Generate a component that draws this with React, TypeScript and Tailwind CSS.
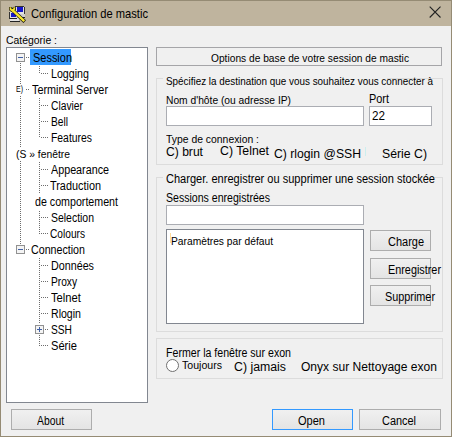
import { useLayoutEffect, useRef, type ReactNode } from "react";
import clsx from "clsx";

/** One line of text, condensed or expanded to fill the width of its box. */
function Line({ children, className }: { children: string; className: string }) {
  const box = useRef<HTMLSpanElement>(null);
  const text = useRef<HTMLSpanElement>(null);
  useLayoutEffect(() => {
    if (!box.current || !text.current) return;
    text.current.style.transform = "none";
    const natural = text.current.getBoundingClientRect().width;
    const wanted = box.current.getBoundingClientRect().width;
    text.current.style.transform = `scaleX(${wanted / natural})`;
  });
  return (
    <span ref={box} className={clsx("block h-4 shrink-0 leading-4", className)}>
      <span ref={text} className="inline-block origin-left whitespace-nowrap">
        {children}
      </span>
    </span>
  );
}

function Toggle({ open }: { open: boolean }) {
  return (
    <svg width="9" height="9" viewBox="0 0 9 9" className="shrink-0" shapeRendering="crispEdges">
      <rect x="0.5" y="0.5" width="8" height="8" rx="1" fill="#f4f4f4" stroke="#919191" />
      <path d={open ? "M2 4.5h5" : "M2 4.5h5M4.5 2v5"} stroke="#3f5fa5" />
    </svg>
  );
}

function PuttyIcon() {
  return (
    <svg width="17" height="17" viewBox="0 0 17 17" className="mt-px shrink-0">
      <g shapeRendering="crispEdges">
        <path d="M6 0h9v8H6z" fill="#e2e2e2" />
        <path d="M8 1h6v5H8z" fill="#1616c8" />
        <path d="M15 1h1v7h-1zM6 0h9v1H6z" fill="#333" />
        <path d="M9 8h7v3H9z" fill="#d0d0d0" />
        <path d="M9 11h7v1H9z" fill="#222" />
        <path d="M1 6h7v6H1z" fill="#e2e2e2" />
        <path d="M2 7h5v4H2z" fill="#1616c8" />
        <path d="M0 6h1v7H0z" fill="#333" />
        <path d="M1 12h9v3H1z" fill="#e2e2e2" />
        <path d="M1 15h10v1H1zM1 12h7v1H1z" fill="#222" />
      </g>
      <path d="M3.5 4L14.4 14.4" stroke="#111" strokeWidth="3.6" strokeLinecap="square" />
      <path d="M1.5 1L1.5 3.6L3.4 4.8L5.5 3.4L5.3 0.8" stroke="#111" strokeWidth="2.8" fill="none" />
      <path d="M1.5 1.3L1.6 3.5L3.4 4.6L5.2 3.2L5.1 1.2" stroke="#f6e52a" strokeWidth="1.7" fill="none" />
      <path d="M3.8 4.4L14.4 14.3" stroke="#f6e52a" strokeWidth="2.4" strokeLinecap="square" />
    </svg>
  );
}

type Item = { label: string; cls: string; toggle?: "open" | "closed" | "E" };

const items: Item[] = [
  { label: "Logging", cls: "ml-[44px] w-[38px]" },
  { label: "Terminal Server", cls: "ml-[2px] w-[76px]", toggle: "E" },
  { label: "Clavier", cls: "ml-[44px] w-[32px]" },
  { label: "Bell", cls: "ml-[44px] w-[17px]" },
  { label: "Features", cls: "ml-[44px] w-[41px]" },
  { label: "(S » fenêtre", cls: "ml-[9px] w-[54px] text-[11px]" },
  { label: "Appearance", cls: "ml-[44px] w-[58px]" },
  { label: "Traduction", cls: "ml-[43px] w-[51px]" },
  { label: "de comportement", cls: "ml-[28px] w-[83px]" },
  { label: "Selection", cls: "ml-[44px] w-[43px]" },
  { label: "Colours", cls: "ml-[43px] w-[35px]" },
  { label: "Connection", cls: "ml-[1px] w-[54px]", toggle: "open" },
  { label: "Données", cls: "ml-[44px] w-[43px]" },
  { label: "Proxy", cls: "ml-[44px] w-[26px]" },
  { label: "Telnet", cls: "ml-[44px] w-[30px]" },
  { label: "Rlogin", cls: "ml-[44px] w-[30px]" },
  { label: "SSH", cls: "ml-[3px] w-[21px]", toggle: "closed" },
  { label: "Série", cls: "ml-[44px] w-[26px]" },
];

/** Dotted connector lines behind the tree's rows. */
function Guides() {
  const stubs = [24, 56, 72, 88, 120, 136, 168, 184, 216, 232, 248, 264, 296];
  return (
    <svg width="60" height="310" className="absolute left-0 top-[1px]" shapeRendering="crispEdges">
      <g stroke="#6d6d6d" strokeDasharray="1 1" fill="none">
        <path d="M13.5 14V36M13.5 47V98M13.5 112V195" />
        <path d="M32.5 17V25M32.5 49V89M32.5 113V145M32.5 162V185M32.5 209V275M32.5 286V297" />
        <path d="M19 8.5h3M19 40.5h3M19 200.5h3M38 280.5h3" />
        {stubs.map((y) => (
          <path key={y} d={`M34 ${y + 0.5}h8`} />
        ))}
      </g>
    </svg>
  );
}

function Tree() {
  return (
    <div className="relative ml-[5px] h-[356px] w-[142px] border border-[#828790] bg-white pt-px">
      <Guides />
      <div className="relative">
        <div className="flex h-4 items-center pl-[9px]">
          <Toggle open />
          <div className="ml-[5px] h-4 w-[41px] bg-[#3399ff] pl-[3px]">
            <Line className="mt-px w-[39px]">Session</Line>
          </div>
        </div>
        {items.map((it) => (
          <div key={it.label} className="flex h-4 items-center">
            {it.toggle === "E" && <Line className="ml-[9px] mr-[7px] w-[7px] text-[9px]">E)</Line>}
            {it.toggle === "open" && (
              <span className="ml-[9px] mr-[5px] flex">
                <Toggle open />
              </span>
            )}
            {it.toggle === "closed" && (
              <span className="ml-[28px] mr-[4px] flex">
                <Toggle open={false} />
              </span>
            )}
            <Line className={clsx("mt-[2px]", it.cls)}>{it.label}</Line>
          </div>
        ))}
      </div>
    </div>
  );
}

function Group({ className, children }: { className: string; children: ReactNode }) {
  return <section className={clsx("w-[287px] border border-[#dcdcdc]", className)}>{children}</section>;
}

function Button({ className, children }: { className?: string; children: ReactNode }) {
  return (
    <button
      className={clsx(
        "flex h-[21px] shrink-0 items-center border bg-linear-to-b from-[#f0f0f0] to-[#e4e4e4] text-left",
        className,
      )}
    >
      {children}
    </button>
  );
}

export default function App() {
  return (
    <div className="flex h-[437px] w-[452px] flex-col overflow-hidden border border-[#958b74] bg-[#f0f0f0] font-['Liberation_Sans',sans-serif] text-[12px] text-black">
      <header className="flex h-[25px] shrink-0 bg-[#bfb49e] pl-[8px] pt-[4px]">
        <PuttyIcon />
        <Line className="ml-[5px] mt-px w-[117px] text-[13px]">Configuration de mastic</Line>
        <svg width="12" height="12" viewBox="0 0 12 12" className="ml-[281px] mt-px">
          <path d="M0.7 0.7l10.8 10.8M11.5 0.7l-10.8 10.8" stroke="#222" strokeWidth="1.1" />
        </svg>
      </header>

      <Line className="ml-[5px] mt-[6px] w-[51px] text-[11px]">Catégorie :</Line>

      <main className="mt-[-1px] flex items-start">
        <Tree />
        <div className="ml-[8px]">
          <div className="h-[19px] w-[286px] border border-[#a5a5a8] pl-[54px]">
            <Line className="mt-[2px] w-[198px] text-[11px]">Options de base de votre session de mastic</Line>
          </div>

          <Group className="mt-[12px] h-[87px]">
            <div className="-mt-[6px] ml-[6px] flex h-4 w-[224px] bg-[#f0f0f0] pl-[3px]">
              <Line className="w-[267px] text-[11px]">Spécifiez la destination que vous souhaitez vous connecter à</Line>
            </div>
            <div className="ml-[9px] mt-[3px] flex">
              <Line className="w-[125px] text-[11px]">Nom d'hôte (ou adresse IP)</Line>
              <Line className="-mt-px ml-[78px] w-[20px]">Port</Line>
            </div>
            <div className="ml-[9px] mt-[-2px] flex gap-[5px]">
              <div className="h-[20px] w-[198px] border border-[#abadb3] bg-white" />
              <div className="h-[20px] w-[63px] border border-[#abadb3] bg-white pl-[2px] pt-px">
                <Line className="w-[13px]">22</Line>
              </div>
            </div>
            <Line className="ml-[9px] mt-[5px] w-[93px] text-[11px]">Type de connexion :</Line>
            <div className="ml-[9px] mt-[-4px] flex">
              <Line className="mt-px w-[37px]">C) brut</Line>
              <Line className="ml-[17px] w-[49px]">C) Telnet</Line>
              <Line className="ml-[5px] mt-[3px] w-[87px]">C) rlogin @SSH</Line>
              <span className="ml-[4px] mt-[4px] h-[9px] w-px bg-[#cdeeee]" />
              <Line className="ml-[16px] mt-[3px] w-[45px]">Série C)</Line>
            </div>
          </Group>

          <Group className="mt-[12px] h-[155px]">
            <div className="-mt-[7px] ml-[6px] flex h-4 w-[254px] bg-[#f0f0f0] pl-[3px]">
              <Line className="w-[269px]">Charger. enregistrer ou supprimer une session stockée</Line>
            </div>
            <Line className="ml-[9px] mt-[3px] w-[104px]">Sessions enregistrées</Line>
            <div className="ml-[9px] mt-[-1px] h-[20px] w-[198px] border border-[#abadb3] bg-white" />
            <div className="ml-[9px] mt-[4px] flex">
              <div className="flex h-[95px] w-[198px] border border-[#828790] bg-white pl-[3px] pt-[3px]">
                <span className="h-[10px] w-px bg-[#ffdc9c]" />
                <Line className="w-[102px] text-[11px]">Paramètres par défaut</Line>
              </div>
              <div className="ml-[6px] mt-px">
                <Button className="w-[61px] border-[#adadad] pl-[17px] pt-[2px]">
                  <Line className="w-[36px]">Charge</Line>
                </Button>
                <Button className="mt-[7px] w-[61px] border-[#adadad] pl-[17px] pt-[2px]">
                  <Line className="w-[53px]">Enregistrer</Line>
                </Button>
                <Button className="mt-[6px] w-[61px] border-[#adadad] pl-[14px] pt-[2px]">
                  <Line className="w-[50px]">Supprimer</Line>
                </Button>
              </div>
            </div>
          </Group>

          <Group className="mt-[6px] h-[41px] pl-[9px] pt-[6px]">
            <Line className="w-[125px]">Fermer la fenêtre sur exon</Line>
            <div className="-mt-[2px] flex">
              <span className="h-[13px] w-[13px] rounded-full border border-[#707070] bg-white" />
              <Line className="ml-[3px] mt-[-2px] w-[40px] text-[11px]">Toujours</Line>
              <Line className="ml-[12px] w-[52px]">C) jamais</Line>
              <Line className="ml-[15px] w-[136px]">Onyx sur Nettoyage exon</Line>
            </div>
          </Group>
        </div>
      </main>

      <footer className="mt-[6px] flex pl-[10px]">
        <Button className="w-[81px] border-[#adadad] pl-[25px] pt-[2px]">
          <Line className="w-[27px]">About</Line>
        </Button>
        <Button className="ml-[180px] w-[81px] border-[#3399ff] pl-[25px] pt-[2px]">
          <Line className="w-[27px]">Open</Line>
        </Button>
        <Button className="ml-[6px] w-[82px] border-[#adadad] pl-[22px] pt-[2px]">
          <Line className="w-[34px]">Cancel</Line>
        </Button>
      </footer>
    </div>
  );
}
